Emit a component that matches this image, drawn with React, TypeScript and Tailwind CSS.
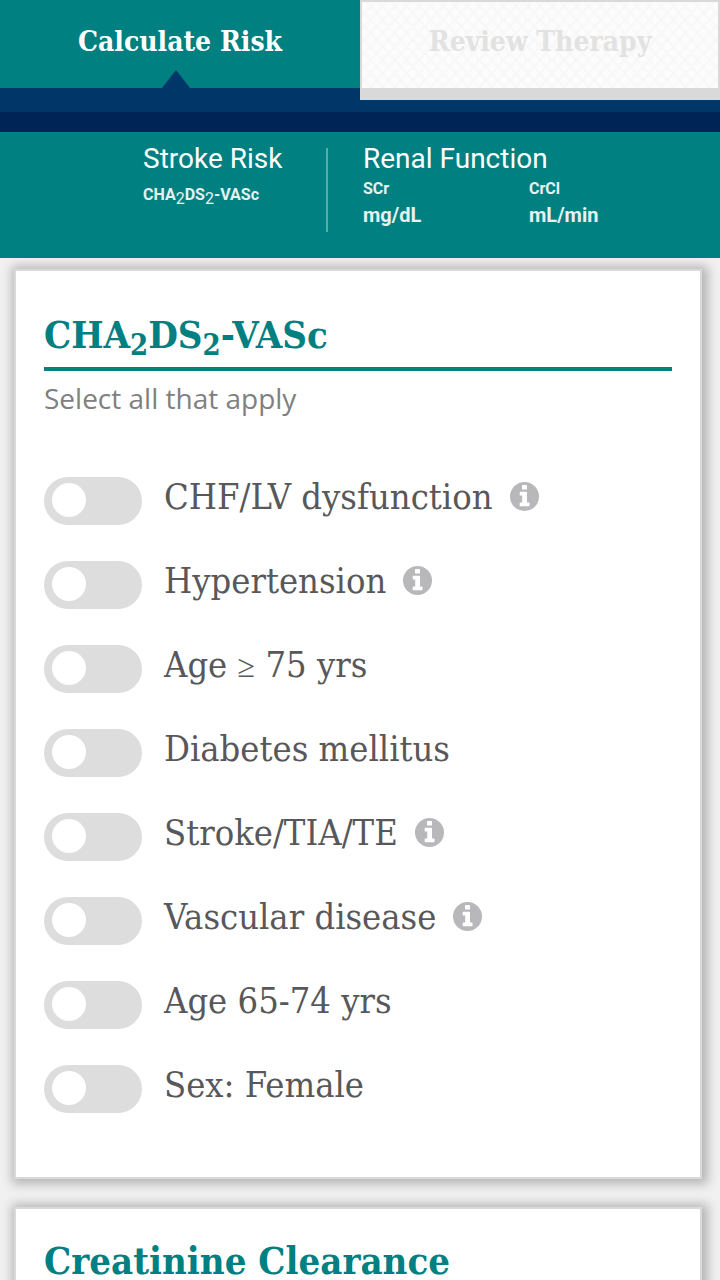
import React, { useState } from 'react';

const riskFactors = [
  { id: 'chf', label: 'CHF/LV dysfunction', info: true },
  { id: 'hypertension', label: 'Hypertension', info: true },
  {
    id: 'age75',
    label: (
      <>
        Age <span className="font-['Liberation_Serif',serif] text-[32px]">≥</span> 75 yrs
      </>
    ),
    info: false,
  },
  { id: 'diabetes', label: 'Diabetes mellitus', info: false },
  { id: 'stroke', label: 'Stroke/TIA/TE', info: true },
  { id: 'vascular', label: 'Vascular disease', info: true },
  { id: 'age65', label: 'Age 65-74 yrs', info: false },
  { id: 'female', label: 'Sex: Female', info: false },
];

function InfoIcon() {
  return (
    <svg viewBox="0 0 29 29" className="size-[29px]" aria-hidden="true">
      <circle cx="14.5" cy="14.5" r="14.5" fill="#b8b8ba" />
      <path
        fill="#fff"
        d="M12.6 3h3.8q.6 0 .6.6v3.3q0 .6-.6.6h-3.8q-.6 0-.6-.6V3.6q0-.6.6-.6zM10.300 9.800h6.100q.6 0 .6.6v10.100h1.900q.6 0 .6.600v2.600q0 .6-.6.6h-8.600q-.6 0-.6-.6v-2.600q0-.6.6-.6h1.900v-6.900h-1.900q-.6 0-.6-.6v-2.600q0-.6.6-.6z"
      />
    </svg>
  );
}

function Card({ title, children }: { title: React.ReactNode; children?: React.ReactNode }) {
  return (
    <section className="mr-[18px] ml-[14px] border-2 border-[#d9d9d9] bg-white px-7 pt-6 pb-16 shadow-[2px_1px_10px_4px_rgba(0,0,0,0.25)] last:pb-0">
      <h2 className="border-b-4 border-[#008080] pb-1 font-['Roboto_Slab','DejaVu_Serif_Condensed','DejaVu_Serif',serif] text-[38px] leading-[56px] font-bold text-[#008080]">
        {title}
      </h2>
      {children}
    </section>
  );
}

export default function App() {
  const [selected, setSelected] = useState<string[]>([]);

  const toggle = (id: string) => {
    setSelected((prev) => (prev.includes(id) ? prev.filter((s) => s !== id) : [...prev, id]));
  };

  return (
    <main className="min-h-screen bg-[#f1f1f1] font-[Roboto,sans-serif]">
      <header>
        <nav className="grid h-28 grid-cols-2 items-start bg-[#003768] font-['Roboto_Slab','DejaVu_Serif_Condensed','DejaVu_Serif',serif] text-[28px] font-bold">
          <button type="button" className="relative h-[88px] bg-[#008080] pb-1 text-white">
            Calculate Risk
            <svg viewBox="0 0 28 18" className="absolute bottom-0 left-[162px] h-[18px] w-7" aria-hidden="true">
              <path d="M14 0 28 18H0z" fill="#003768" />
            </svg>
          </button>
          <button
            type="button"
            className="h-[100px] border-2 border-b-12 border-[#d9d9d9] bg-[#fcfcfc] bg-[repeating-linear-gradient(48deg,transparent_0_5px,#f7f7f7_7px,transparent_9px),repeating-linear-gradient(-48deg,transparent_0_5px,#f7f7f7_7px,transparent_9px)] pb-1.5 text-[#e2e2e2]"
          >
            Review Therapy
          </button>
        </nav>
        <div className="h-5 bg-[#002456]" />
        <div className="flex h-[126px] bg-[#008080] pt-4 text-white">
          <div className="h-[84px] w-[328px] border-r-2 border-white/35 pl-[143px]">
            <h3 className="-mt-[5px] text-[28px] leading-8">Stroke Risk</h3>
            <p className="mt-2 text-base font-bold text-white/90">
              CHA<sub className="text-base leading-none font-normal">2</sub>DS
              <sub className="text-base leading-none font-normal">2</sub>-VASc
            </p>
          </div>
          <div className="pl-[35px]">
            <h3 className="-mt-[5px] text-[28px] leading-8">Renal Function</h3>
            <dl className="grid w-[332px] grid-cols-2 font-bold text-white/90">
              <div>
                <dt className="text-base leading-7">SCr</dt>
                <dd className="text-xl leading-6">mg/dL</dd>
              </div>
              <div>
                <dt className="text-base leading-7">CrCl</dt>
                <dd className="text-xl leading-6">mL/min</dd>
              </div>
            </dl>
          </div>
        </div>
      </header>

      <div className="flex flex-col gap-7 pt-[11px]">
        <Card
          title={
            <span className="block pt-3">
              CHA<sub className="text-[29px] leading-none">2</sub>DS
              <sub className="text-[29px] leading-none">2</sub>-VASc
            </span>
          }
        >
          <p className="mt-2 font-['Open_Sans',sans-serif] text-[28px] leading-[38px] text-[#808080]">
            Select all that apply
          </p>
          <ul className="mt-[60px] flex flex-col gap-9">
            {riskFactors.map((factor) => (
              <li key={factor.id} className="flex h-12 items-center">
                <input
                  id={factor.id}
                  type="checkbox"
                  role="switch"
                  checked={selected.includes(factor.id)}
                  onChange={() => toggle(factor.id)}
                  className="h-12 w-[98px] shrink-0 cursor-pointer appearance-none rounded-full bg-[#dddddd] px-2 pt-1.5 before:block before:size-[34px] before:rounded-full before:bg-white checked:bg-[#008080] checked:before:ml-auto"
                />
                <label
                  htmlFor={factor.id}
                  className="ml-[22px] pb-2 font-['Roboto_Slab','DejaVu_Serif_Condensed','DejaVu_Serif',serif] text-[36px] leading-10 text-[#58585a]"
                >
                  {factor.label}
                </label>
                {factor.info && (
                  <button type="button" className="mb-[10px] ml-[17px]" aria-label={`About ${factor.label}`}>
                    <InfoIcon />
                  </button>
                )}
              </li>
            ))}
          </ul>
        </Card>
        <Card title="Creatinine Clearance" />
      </div>
    </main>
  );
}
